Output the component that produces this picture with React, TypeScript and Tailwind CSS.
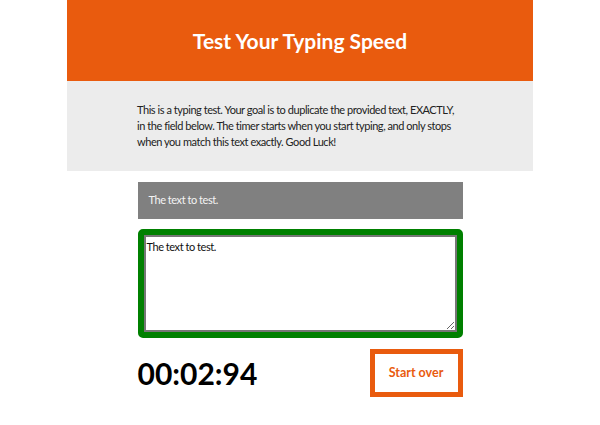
export default function App() {
  return (
    <div className="min-h-screen bg-white" style={{ fontFamily: 'Lato, "Liberation Sans", sans-serif' }}>
      <div className="mx-auto w-[466px]">
        <header className="flex h-[81px] items-center justify-center bg-[#e95b0e]">
          <h1 className="text-[21px] font-bold text-white">Test Your Typing Speed</h1>
        </header>

        <section className="h-[90px] bg-[#ececec] pl-[70px] pt-[21px]">
          <p className="whitespace-nowrap text-[11px] leading-4 tracking-[-0.45px] text-[#222]">
            This is a typing test. Your goal is to duplicate the provided text, EXACTLY,
            <br />
            in the field below. The timer starts when you start typing, and only stops
            <br />
            when you match this text exactly. Good Luck!
          </p>
        </section>

        <main className="mx-auto w-[325px] pt-[11px]">
          <div className="flex h-[37px] items-center bg-[#808080] px-[11px] text-[11px] tracking-[-0.45px] text-[#f4f4f4]">
            The text to test.
          </div>

          <div className="mt-[10px] h-[109px] rounded-[5px] border-[6px] border-[#008000]">
            <textarea
              defaultValue="The text to test."
              spellCheck={false}
              className="block h-full w-full resize border-2 border-[#767676] bg-white px-[1px] pt-[2px] text-[11px] tracking-[-0.45px] text-[#111] outline-none"
              style={{ fontFamily: 'Lato, "Liberation Sans", sans-serif' }}
            />
          </div>

          <div className="mt-[11px] flex h-[48px] items-center justify-between">
            <span className="text-[30px] font-bold leading-none text-black">00:02:94</span>
            <button className="h-[48px] w-[93px] border-[5px] border-[#e95b0e] bg-white text-[12.5px] font-bold text-[#e95b0e]">
              Start over
            </button>
          </div>
        </main>
      </div>
    </div>
  );
}
